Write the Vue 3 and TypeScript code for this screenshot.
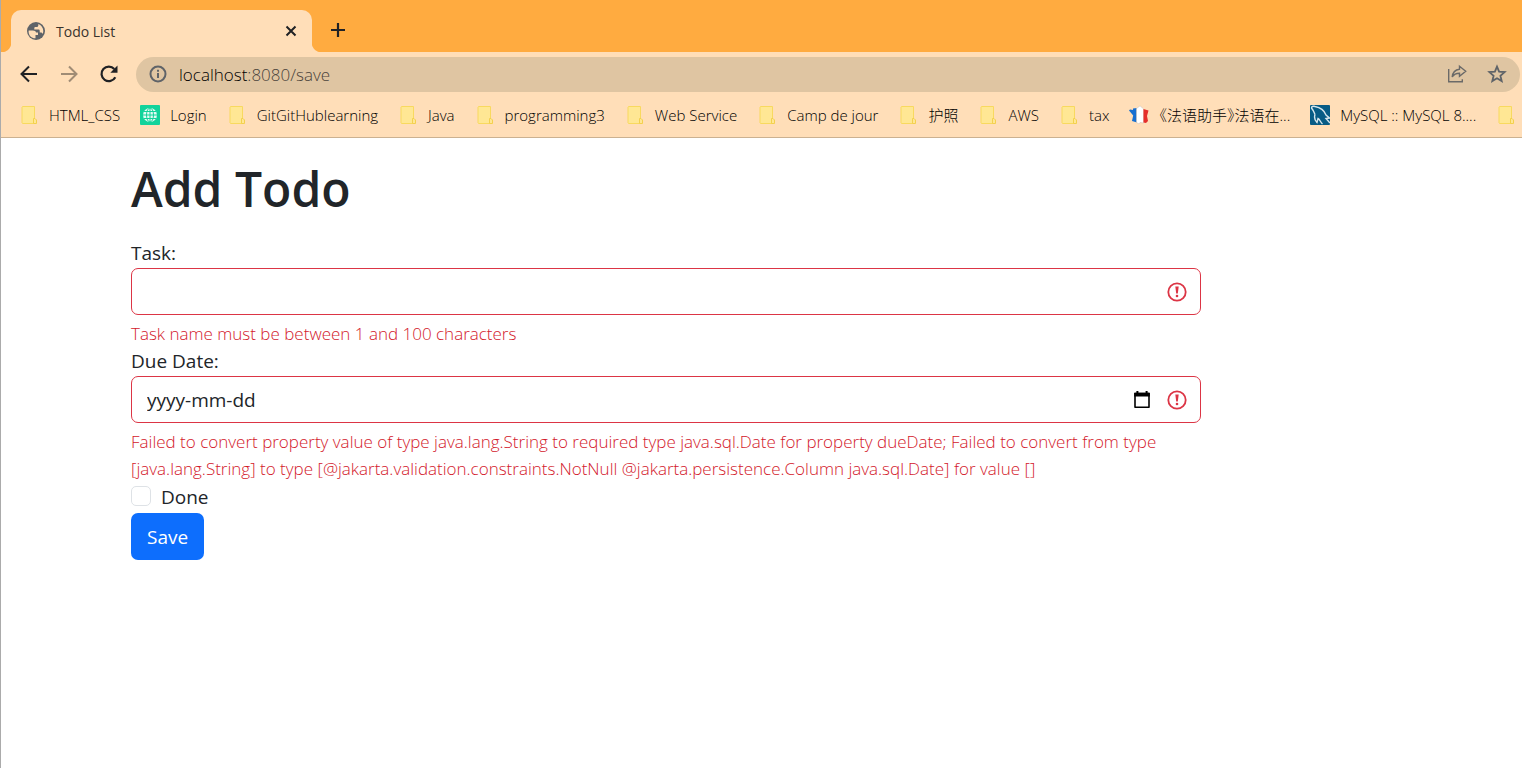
<script setup lang="ts">
import { ref } from 'vue'

type Icon = 'folder' | 'globe' | 'france' | 'mysql'

interface Bookmark {
  label: string
  icon: Icon
}

const bookmarks: Bookmark[] = [
  { label: 'HTML_CSS', icon: 'folder' },
  { label: 'Login', icon: 'globe' },
  { label: 'GitGitHublearning', icon: 'folder' },
  { label: 'Java', icon: 'folder' },
  { label: 'programming3', icon: 'folder' },
  { label: 'Web Service', icon: 'folder' },
  { label: 'Camp de jour', icon: 'folder' },
  { label: '护照', icon: 'folder' },
  { label: 'AWS', icon: 'folder' },
  { label: 'tax', icon: 'folder' },
  { label: '《法语助手》法语在...', icon: 'france' },
  { label: 'MySQL :: MySQL 8....', icon: 'mysql' },
  { label: '', icon: 'folder' },
]

const task = ref('')
const dueDate = ref('')
const done = ref(false)
</script>

<template>
  <div class="window">
    <header class="chrome">
      <div class="tabs">
        <div class="tab">
          <svg class="tab-icon" viewBox="0 0 20 20" width="20" height="20" aria-hidden="true">
            <circle cx="10" cy="10" r="9" fill="#5f6368" />
            <path d="M2.700 9.400h4.100c1.900 0 3.200.7 3.200 2.100h2v2.600H9.500v3.200c-3.700.2-6.900-2.700-6.900-6.800zM12.300 3c2.900 1 5 3.800 5 7 0 1.100-.2 2-.7 2.900-.4-.9-1-1.400-2-1.400h-.9V9.900c0-.8-.5-1.300-1.300-1.300H8.300V7.300c0-.7.5-1.200 1.200-1.200h1.200c.9 0 1.600-.6 1.600-1.500z" fill="#ffdeb8" />
          </svg>
          <span class="tab-title">Todo List</span>
          <button class="icon-button close" type="button" aria-label="Close tab">
            <svg viewBox="0 0 12 12" width="12" height="12"><path d="M1.500 1.500l9 9M10.500 1.500l-9 9" stroke="#202124" stroke-width="2" /></svg>
          </button>
        </div>
        <button class="icon-button new-tab" type="button" aria-label="New tab">
          <svg viewBox="0 0 16 16" width="16" height="16"><path d="M8 1v14M1 8h14" stroke="#202124" stroke-width="2.200" /></svg>
        </button>
      </div>

      <nav class="toolbar" aria-label="Navigation">
        <button class="icon-button" type="button" aria-label="Back">
          <svg viewBox="0 0 20 20" width="20" height="20"><path d="M18 10H3M10 2.500L2.500 10l7.500 7.500" fill="none" stroke="#202124" stroke-width="2" /></svg>
        </button>
        <button class="icon-button" type="button" aria-label="Forward" disabled>
          <svg viewBox="0 0 20 20" width="20" height="20"><path d="M2 10h15M10 2.500l7.500 7.500-7.500 7.500" fill="none" stroke="#a08c75" stroke-width="2" /></svg>
        </button>
        <button class="icon-button" type="button" aria-label="Reload">
          <svg viewBox="0 0 20 20" width="20" height="20">
            <path d="M16.300 13.200A7.300 7.300 0 1 1 15.300 5" fill="none" stroke="#202124" stroke-width="2.200" />
            <path d="M18.500 1.500v7.200h-7.200z" fill="#202124" />
          </svg>
        </button>
        <div class="omnibox">
          <svg viewBox="0 0 18 18" width="18" height="18" aria-hidden="true">
            <circle cx="9" cy="9" r="7.500" fill="none" stroke="#5f6368" stroke-width="2" />
            <path d="M9 8v5M9 4.700v2" stroke="#5f6368" stroke-width="2" />
          </svg>
          <span class="address"><span class="host">localhost</span>:8080/save</span>
          <button class="icon-button" type="button" aria-label="Share">
            <svg viewBox="0 0 20 20" width="20" height="20" fill="none" stroke="#6b6a68" stroke-width="1.400">
              <path d="M1.700 5v12.800h13.600v-2.500" />
              <path d="M12.500 2.200l6.200 5-6.200 5V9.300c-3.300 0-5.700 1.100-7.300 3.700.4-4.200 2.900-7.300 7.300-7.800z" />
            </svg>
          </button>
          <button class="icon-button" type="button" aria-label="Bookmark this page">
            <svg viewBox="0 0 20 20" width="20" height="20"><path d="M10 2.600l2.100 5.100 5.500.4-4.200 3.600 1.300 5.400-4.700-2.900-4.700 2.900 1.300-5.400-4.200-3.600 5.500-.4z" fill="none" stroke="#5f6368" stroke-width="1.800" /></svg>
          </button>
        </div>
      </nav>

      <nav class="bookmarks" aria-label="Bookmarks">
        <a v-for="(b, i) in bookmarks" :key="i" class="bookmark" href="#" :aria-label="b.label || 'Folder'">
          <svg v-if="b.icon === 'folder'" viewBox="0 0 20 20" width="20" height="20">
            <path d="M3.500 1.500h12v12.500l1.500 1v2.500l-1 1H3.500l-.5-.5V2z" fill="#ffe794" stroke="#f8d95f" />
            <path d="M14.500 18.500v-5h1.500l1.500 1.500v3.500z" fill="#ffe794" stroke="#f3d04e" />
          </svg>
          <svg v-else-if="b.icon === 'globe'" viewBox="0 0 20 20" width="20" height="20">
            <rect width="20" height="20" rx="1" fill="#12d39b" />
            <circle cx="10" cy="10" r="7" fill="#e2fbf3" />
            <g fill="none" stroke="#12d39b">
              <ellipse cx="10" cy="10" rx="3.500" ry="7" />
              <path d="M10 3v14M3 10h14M4 6.500h12M4 13.500h12" />
            </g>
          </svg>
          <svg v-else-if="b.icon === 'france'" viewBox="0 0 20 20" width="20" height="20">
            <path d="M0 5.500l1-1 3 .5V3.500L8 3v14.500l-5-1.500 1.200-5.500z" fill="#176fd0" />
            <path d="M7.500 3.500L11 .8l3.500 3V18L11 17.500 10 19l-2.500-1.500z" fill="#fff" stroke="#d0c2b6" stroke-width=".6" />
            <path d="M14.500 4l5 1.500-1.500 5.500 1 5-2 2-2.500-.5z" fill="#e52f2c" />
          </svg>
          <svg v-else viewBox="0 0 20 20" width="20" height="20">
            <rect width="20" height="20" rx="1" fill="#075b85" />
            <path d="M5 9.500C4 7.500 3.500 5.500 1.500 3c0-1.500 1.500-2 3.500-1.500 5.500 1 9.500 4.500 11 8.500l3.500 3-3.500.5 4 4.500M5 9.500c-1 3 0 6 2 8l1-4c2 1 2.500 4 4.500 5.500" fill="none" stroke="#d5e5ec" stroke-width="1.400" />
          </svg>
          <span v-if="b.label">{{ b.label }}</span>
        </a>
      </nav>
    </header>

    <main class="page">
      <h1>Add Todo</h1>
      <form @submit.prevent>
        <label class="field-label" for="task">Task:</label>
        <div class="field">
          <input id="task" v-model="task" type="text" aria-describedby="task-error" aria-invalid="true" />
          <svg class="alert" viewBox="0 0 20 20" width="20" height="20" aria-hidden="true">
            <circle cx="10" cy="10" r="8.700" fill="none" stroke="#dc3545" stroke-width="1.800" />
            <path d="M8.300 4.500h3.400l-.9 7H9.200z" fill="#dc3545" />
            <circle cx="10" cy="14" r="1.300" fill="#dc3545" />
          </svg>
        </div>
        <p id="task-error" class="error">Task name must be between 1 and 100 characters</p>

        <label class="field-label" for="due">Due Date:</label>
        <div class="field">
          <input id="due" v-model="dueDate" type="text" placeholder="yyyy-mm-dd" aria-describedby="due-error" aria-invalid="true" />
          <button class="icon-button" type="button" aria-label="Open calendar">
            <svg viewBox="0 0 18 20" width="18" height="20">
              <path d="M2 3.500h14v13.700H2z" fill="none" stroke="#000" stroke-width="1.600" stroke-linejoin="round" />
              <path d="M1.200 2.700h15.600v3.800H1.200zM3.400 1h2v2h-2zM12.600 1h2v2h-2z" fill="#000" />
            </svg>
          </button>
          <svg class="alert" viewBox="0 0 20 20" width="20" height="20" aria-hidden="true">
            <circle cx="10" cy="10" r="8.700" fill="none" stroke="#dc3545" stroke-width="1.800" />
            <path d="M8.300 4.500h3.400l-.9 7H9.200z" fill="#dc3545" />
            <circle cx="10" cy="14" r="1.300" fill="#dc3545" />
          </svg>
        </div>
        <p id="due-error" class="error">
          Failed to convert property value of type java.lang.String to required type java.sql.Date for property dueDate; Failed to convert from type [java.lang.String] to type [@jakarta.validation.constraints.NotNull @jakarta.persistence.Column java.sql.Date] for value []
        </p>

        <div class="check">
          <input id="done" v-model="done" type="checkbox" />
          <label for="done">Done</label>
        </div>
        <button class="save" type="submit">Save</button>
      </form>
    </main>
  </div>
</template>

<style>
body {
  background: #fff;
}
</style>

<style scoped>
.window {
  min-height: 100vh;
  box-sizing: border-box;
  border-left: 1px solid #ababab;
  overflow: hidden;
  font-family: "Open Sans", "Noto Sans", "Noto Sans CJK SC", sans-serif;
  color: #212529;
}

.chrome {
  background: #ffdeb8;
  border-bottom: 1px solid #cbb191;
}

.icon-button {
  display: flex;
  flex: none;
  padding: 0;
  border: 0;
  background: none;
}

.tabs {
  display: flex;
  align-items: flex-end;
  height: 52px;
  background: #ffab40;
}

.tab {
  position: relative;
  display: flex;
  align-items: center;
  box-sizing: border-box;
  width: 301px;
  height: 42px;
  margin-left: 10px;
  padding: 0 15px;
  border-radius: 10px 10px 0 0;
  background: #ffdeb8;
}

.tab::before,
.tab::after {
  content: "";
  position: absolute;
  bottom: 0;
  width: 10px;
  height: 10px;
}

.tab::before {
  right: 100%;
  background: radial-gradient(circle at 0 0, #ffab40 10px, #ffdeb8 11px);
}

.tab::after {
  left: 100%;
  background: radial-gradient(circle at 100% 0, #ffab40 10px, #ffdeb8 11px);
}

.tab-title {
  flex: 1;
  margin-left: 10px;
  font-size: 14px;
  color: #3a332c;
}

.new-tab {
  margin: 0 0 14px 18px;
}

.toolbar {
  display: flex;
  align-items: center;
  gap: 20px;
  height: 44px;
  padding: 0 2px 0 18px;
}

.omnibox {
  display: flex;
  flex: 1;
  align-items: center;
  gap: 20px;
  height: 35px;
  margin-left: -3px;
  padding: 0 13px;
  border-radius: 18px;
  background: #dfc5a2;
}

.address {
  flex: 1;
  margin-left: -8px;
  font-size: 17px;
  font-weight: 300;
  color: #4a433b;
}

.host {
  color: #000;
}

.bookmarks {
  display: flex;
  align-items: center;
  gap: 20px;
  height: 41px;
  padding: 0 0 4px 18px;
  overflow: hidden;
  box-sizing: border-box;
}

.bookmark {
  display: flex;
  flex: none;
  align-items: center;
  gap: 10px;
  font-size: 15px;
  line-height: 20px;
  font-weight: 300;
  font-feature-settings: "halt" 1;
  color: #000;
  text-decoration: none;
  white-space: nowrap;
}

.page {
  max-width: 1070px;
  margin: 0 130px;
  padding-top: 21px;
}

h1 {
  margin: 0 0 20px;
  font-size: 48px;
  line-height: 60px;
  font-weight: 600;
}

.field-label {
  display: block;
  font-size: 19px;
  line-height: 29px;
}

.field {
  display: flex;
  align-items: center;
  gap: 16px;
  box-sizing: border-box;
  height: 47px;
  padding: 0 13px 0 15px;
  border: 1px solid #dc3545;
  border-radius: 7px;
}

.field input {
  flex: 1;
  min-width: 0;
  height: 100%;
  padding: 0;
  border: 0;
  outline: 0;
  background: none;
  font: inherit;
  font-size: 19px;
  color: #212529;
}

.field input::placeholder {
  color: #212529;
  opacity: 1;
}

.alert {
  flex: none;
}

.error {
  margin: 5px 0 0;
  font-size: 17px;
  line-height: 27px;
  font-weight: 300;
  color: #d3182b;
}

.check {
  display: flex;
  align-items: flex-start;
  gap: 10px;
  font-size: 19px;
  line-height: 31px;
}

.check input {
  appearance: none;
  width: 20px;
  height: 20px;
  margin: 4px 0 0;
  border: 1px solid #dee2e6;
  border-radius: 5px;
}

.check input:checked {
  background: #0d6efd;
}

.save {
  display: block;
  height: 47px;
  padding: 0 16px;
  border: 0;
  border-radius: 7px;
  background: #0d6efd;
  color: #fff;
  font: inherit;
  font-size: 19px;
}
</style>
